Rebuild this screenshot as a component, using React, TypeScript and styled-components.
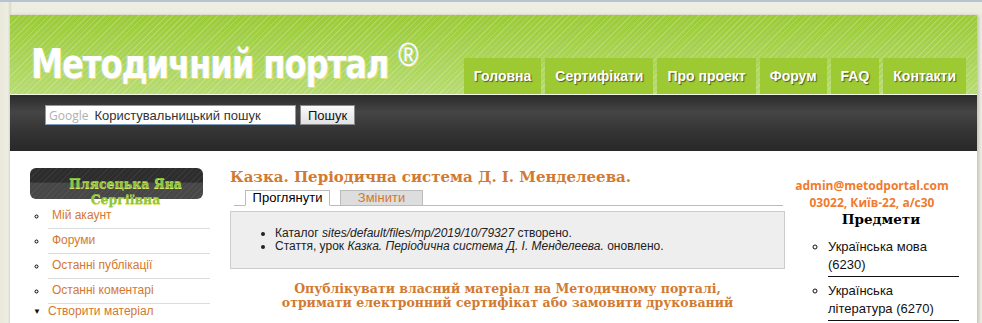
import styled, { createGlobalStyle } from 'styled-components';

const GlobalStyle = createGlobalStyle`
  html, body {
    margin: 0;
    padding: 0;
  }
  body {
    background: linear-gradient(to right, #e9e8da 0px, #eeede2 8px, #d9d8c8 10px, #eeede2 12px) #eeede2;
    border-top: 2px solid #b8c3d2;
    font-family: "Liberation Sans", Arial, sans-serif;
    overflow: hidden;
  }
`;

const navItems = ['Головна', 'Сертифікати', 'Про проект', 'Форум', 'FAQ', 'Контакти'];
const userMenu = ['Мій акаунт', 'Форуми', 'Останні публікації', 'Останні коментарі'];
const subjects = [
  { name: 'Українська мова', count: 6230 },
  { name: 'Українська література', count: 6270 },
];

const App = () => {
  return (
    <>
      <GlobalStyle />
      <Page>
        <Header>
          <Logo>
            Методичний портал <Reg>®</Reg>
          </Logo>
          <Nav>
            {navItems.map((item) => (
              <NavTab key={item}>{item}</NavTab>
            ))}
          </Nav>
        </Header>
        <SearchBar>
          <SearchInput>
            <GoogleMark>Google</GoogleMark>
            <span>Користувальницький пошук</span>
          </SearchInput>
          <SearchButton>Пошук</SearchButton>
        </SearchBar>
        <Body>
          <Sidebar>
            <UserBox>
              <UserName>Плясецька Яна Сергіївна</UserName>
            </UserBox>
            <UserMenu>
              {userMenu.map((item) => (
                <MenuItem key={item}>
                  <MenuLink>{item}</MenuLink>
                </MenuItem>
              ))}
            </UserMenu>
            <Expand>
              <Arrow>▼</Arrow>
              <MenuLink>Створити матеріал</MenuLink>
            </Expand>
          </Sidebar>
          <Main>
            <Title>Казка. Періодична система Д. І. Менделеева.</Title>
            <Tabs>
              <Tab $active>Проглянути</Tab>
              <Tab>Змінити</Tab>
            </Tabs>
            <Messages>
              <ul>
                <li>
                  Каталог <em>sites/default/files/mp/2019/10/79327</em> створено.
                </li>
                <li>
                  Стаття, урок <em>Казка. Періодична система Д. І. Менделеева.</em> оновлено.
                </li>
              </ul>
            </Messages>
            <Promo>
              Опублікувати власний матеріал на Методичному порталі,
              <br />
              отримати електронний сертифікат або замовити друкований
            </Promo>
          </Main>
          <RightCol>
            <Contact>
              admin@metodportal.com
              <br />
              03022, Київ-22, а/с30
            </Contact>
            <BlockTitle>Предмети</BlockTitle>
            <SubjectList>
              {subjects.map((s) => (
                <Subject key={s.name}>
                  {s.name} ({s.count})
                </Subject>
              ))}
            </SubjectList>
          </RightCol>
        </Body>
      </Page>
    </>
  );
};

export default App;

const Page = styled.div`
  margin: 13px 0 0 10px;
  width: 967px;
  background: #ffffff;
  box-shadow: 2px 0 3px rgba(120, 120, 100, 0.35);
`;

const Header = styled.div`
  height: 79px;
  display: flex;
  align-items: flex-end;
  background:
    repeating-linear-gradient(135deg, rgba(255, 255, 255, 0) 0 3px, rgba(255, 255, 255, 0.18) 3px 4px),
    linear-gradient(to bottom, #9acb36, #b7dc72);
  border-bottom: 1px solid #f4f8ea;
`;

const Logo = styled.div`
  flex: 1;
  min-width: 0;
  margin: 0 0 7px 21px;
  color: #ffffff;
  font-family: "DejaVu Sans", sans-serif;
  font-weight: bold;
  font-size: 41px;
  letter-spacing: -1.5px;
  line-height: 46px;
  white-space: nowrap;
  transform: scaleX(0.79);
  transform-origin: left bottom;
  text-shadow: -1px 0 0 #a8d8e8, 1px 1px 0 #e6e27a;
`;

const Reg = styled.span`
  font-family: "Liberation Sans", Arial, sans-serif;
  font-weight: normal;
  font-size: 34px;
  letter-spacing: 0;
  vertical-align: 12px;
`;

const Nav = styled.div`
  flex: none;
  display: flex;
  gap: 4px;
  margin-right: 11px;
`;

const NavTab = styled.div`
  height: 36px;
  padding: 0 10px;
  display: flex;
  align-items: center;
  white-space: nowrap;
  background: #9dca33;
  color: #ffffff;
  font-weight: bold;
  font-size: 14px;
  text-shadow: 1px 1px 1px #4a5a20;
`;

const SearchBar = styled.div`
  height: 56px;
  display: flex;
  align-items: flex-start;
  gap: 4px;
  padding: 10px 0 0 35px;
  box-sizing: border-box;
  background: linear-gradient(to bottom, #2b2b2b 0%, #454545 30%, #343434 65%, #282828 100%);
`;

const SearchInput = styled.div`
  width: 251px;
  height: 20px;
  box-sizing: border-box;
  background: #ffffff;
  border: 1px solid #7f9db9;
  display: flex;
  align-items: center;
  gap: 6px;
  padding-left: 3px;
  font-size: 13px;
  color: #333333;
`;

const GoogleMark = styled.span`
  color: #b0b0b0;
  font-family: "Open Sans", sans-serif;
  font-size: 12px;
`;

const SearchButton = styled.div`
  width: 55px;
  height: 20px;
  box-sizing: border-box;
  display: flex;
  align-items: center;
  justify-content: center;
  font-size: 13px;
  color: #111111;
  background: linear-gradient(to bottom, #fafafa, #e2e2e2);
  border: 1px solid #8a8a8a;
`;

const Body = styled.div`
  display: flex;
  padding-left: 20px;
  height: 173px;
  overflow: hidden;
`;

const Sidebar = styled.div`
  width: 180px;
  padding-top: 17px;
`;

const UserBox = styled.div`
  width: 173px;
  height: 31px;
  border-radius: 6px;
  box-sizing: border-box;
  padding: 8px 0 0 18px;
  background:
    repeating-linear-gradient(135deg, rgba(255, 255, 255, 0) 0 3px, rgba(255, 255, 255, 0.05) 3px 4px),
    linear-gradient(to bottom, #2d2d2d 0%, #2d2d2d 45%, #474747 50%, #474747 100%);
`;

const UserName = styled.div`
  text-align: center;
  font-family: "DejaVu Serif", serif;
  font-weight: bold;
  font-size: 12.5px;
  line-height: 16px;
  color: #8cc63e;
  text-shadow: 0 1px 0 #dce86a;
`;

const UserMenu = styled.ul`
  margin: 9px 0 0 0;
  padding: 0 0 0 18px;
  list-style: circle;
  font-size: 8px;
`;

const MenuItem = styled.li`
  padding: 0 0 4px 4px;
  margin-bottom: 4px;
  border-bottom: 1px solid #dddddd;
  line-height: 14px;
  &::marker {
    font-size: 11px;
  }
`;

const MenuLink = styled.span`
  font-size: 12px;
  color: #d4782f;
`;

const Expand = styled.div`
  display: flex;
  align-items: center;
  gap: 7px;
  padding-left: 3px;
  margin-top: -4px;
`;

const Arrow = styled.span`
  font-size: 8px;
  color: #111111;
`;

const Main = styled.div`
  width: 555px;
  margin-left: 20px;
  padding-top: 18px;
`;

const Title = styled.h1`
  margin: 0 0 4px 0;
  font-family: "DejaVu Serif", serif;
  font-weight: bold;
  font-size: 15px;
  line-height: 17px;
  color: #d27a30;
`;

const Tabs = styled.div`
  display: flex;
  gap: 10px;
  margin: 0 2px 0 4px;
  padding-left: 11px;
  border-bottom: 1px solid #bbbbbb;
`;

const Tab = styled.div<{ $active?: boolean }>`
  width: ${(p) => (p.$active ? '83px' : '81px')};
  height: 14px;
  box-sizing: content-box;
  border: 1px solid #bbbbbb;
  border-bottom: ${(p) => (p.$active ? '1px solid #ffffff' : 'none')};
  margin-bottom: -1px;
  background: ${(p) => (p.$active ? '#ffffff' : '#dddddd')};
  color: ${(p) => (p.$active ? '#000000' : '#d4782f')};
  font-size: 13px;
  line-height: 14px;
  text-align: center;
`;

const Messages = styled.div`
  margin-top: 5px;
  height: 58px;
  box-sizing: border-box;
  background: #eeeeee;
  border: 1px solid #cccccc;
  padding-top: 15px;
  font-size: 12px;
  color: #222222;
  ul {
    margin: 0;
    padding-left: 44px;
  }
  li {
    line-height: 13px;
  }
`;

const Promo = styled.div`
  margin-top: 13px;
  text-align: center;
  font-family: "DejaVu Serif", serif;
  font-weight: bold;
  font-size: 12.5px;
  line-height: 14px;
  color: #d27a30;
`;

const RightCol = styled.div`
  width: 172px;
  margin-left: 10px;
  padding-top: 26px;
`;

const Contact = styled.div`
  margin-right: 18px;
  text-align: center;
  font-family: "Open Sans", sans-serif;
  font-weight: bold;
  font-size: 12px;
  line-height: 17px;
  color: #f07b2e;
`;

const BlockTitle = styled.h2`
  margin: 0;
  text-align: center;
  font-family: "DejaVu Serif", serif;
  font-weight: bold;
  font-size: 13.5px;
  line-height: 16px;
  color: #000000;
`;

const SubjectList = styled.ul`
  margin: 11px 0 0 0;
  padding: 0 8px 0 33px;
  list-style: circle;
`;

const Subject = styled.li`
  font-size: 13px;
  line-height: 18px;
  color: #111111;
  padding: 0 14px 2px 0;
  margin-bottom: 5px;
  border-bottom: 1px solid #111111;
`;
